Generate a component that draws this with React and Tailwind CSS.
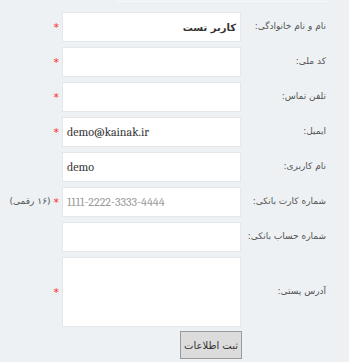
import React from "react";

const fields = [
  { label: "نام و نام خانوادگی:", value: "کاربر تست", kind: "bold", req: true },
  { label: "کد ملی:", value: "", req: true },
  { label: "تلفن تماس:", value: "", req: true },
  { label: "ایمیل:", value: "demo@kainak.ir", kind: "ltr", req: true },
  { label: "نام کاربری:", value: "demo", kind: "ltr" },
  { label: "شماره کارت بانکی:", value: "1111-2222-3333-4444", kind: "placeholder", req: true, note: "(۱۶ رقمی)" },
  { label: "شماره حساب بانکی:", value: "" },
];

function Field({ f }) {
  let inner = null;
  if (f.kind === "bold") {
    inner = <span className="font-bold text-[#333] text-[10px]">{f.value}</span>;
  } else if (f.kind === "ltr") {
    inner = <span dir="ltr" className="w-full text-left text-[#333] text-[12px] font-serif">{f.value}</span>;
  } else if (f.kind === "placeholder") {
    inner = <span dir="ltr" className="w-full text-left text-[#9a9a9a] text-[12px] font-serif">{f.value}</span>;
  }
  return (
    <div className="flex items-center h-[30px] mb-[5px]">
      <div className="w-[108px] shrink-0 pr-[23px] text-[9px] text-[#555] whitespace-nowrap">{f.label}</div>
      <div className="w-[179px] h-[30px] shrink-0 bg-white border border-[#e4e8eb] flex items-center px-[4px]">{inner}</div>
      <div className="flex items-center gap-[3px] mr-[3px]">
        {f.req && <span className="text-[#ff2a2a] text-[11px] leading-none">*</span>}
        {f.note && <span className="text-[9px] text-[#555] whitespace-nowrap">{f.note}</span>}
      </div>
    </div>
  );
}

export default function App() {
  return (
    <div dir="rtl" className="w-[349px] h-[362px] bg-[#edf1f4] font-['DejaVu_Sans',sans-serif] overflow-hidden">
      <div className="h-[12px] pt-[1px]">
        <div className="h-px w-[210px] mr-[22px] bg-[#f6f8fa]" />
      </div>
      {fields.map((f, i) => (
        <Field key={i} f={f} />
      ))}
      <div className="flex items-center h-[70px]">
        <div className="w-[108px] shrink-0 pr-[23px] text-[9px] text-[#555] whitespace-nowrap">آدرس پستی:</div>
        <div className="w-[179px] h-[70px] shrink-0 bg-white border border-[#e4e8eb]" />
        <span className="mr-[3px] text-[#ff2a2a] text-[11px] leading-none">*</span>
      </div>
      <div className="flex mt-[4px] pr-[107px]">
        <button className="w-[62px] h-[28px] bg-[#dcdcdc] border border-[#9a9a9a] text-[10px] text-[#333]">ثبت اطلاعات</button>
      </div>
    </div>
  );
}
